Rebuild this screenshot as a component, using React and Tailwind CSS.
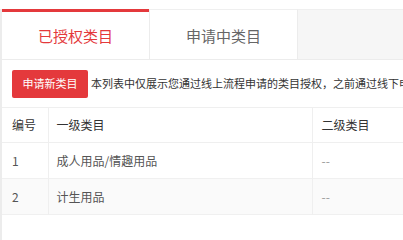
export default function App() {
  const rows = [
    { id: 1, first: "成人用品/情趣用品", second: "--" },
    { id: 2, first: "计生用品", second: "--" },
  ];

  return (
    <div
      className="w-[403px] h-[240px] overflow-hidden bg-white pt-[9px]"
      style={{ fontFamily: '"Noto Sans CJK SC", "Liberation Sans", sans-serif' }}
    >
      <div className="border-l-2 border-[#ececec] h-full">
        {/* Tabs */}
        <div className="flex h-[51px] bg-[#f6f6f6] border-b border-[#ececec]">
          <div className="w-[147px] shrink-0 bg-white border-t-[3px] border-[#e4393c] flex items-center justify-center pt-[2px] text-[15px] text-[#e4393c]">
            已授权类目
          </div>
          <div className="w-[148px] shrink-0 bg-white border-l border-[#ececec] border-t border-t-[#efefef] flex items-center justify-center pt-[3px] text-[15px] text-[#666]">
            申请中类目
          </div>
          <div className="flex-1 border-l border-[#ececec] border-t border-t-[#efefef]" />
        </div>

        {/* Toolbar */}
        <div className="flex items-center h-[47px] pl-[10px] gap-[3px] whitespace-nowrap">
          <button className="shrink-0 w-[76px] h-[28px] rounded-[2px] bg-[#e4393c] text-white text-[11px]">
            申请新类目
          </button>
          <span className="text-[11px] text-[#333]">
            本列表中仅展示您通过线上流程申请的类目授权，之前通过线下申请的类目授权请联系运营人员
          </span>
        </div>

        {/* Table */}
        <table className="w-[420px] border-collapse text-[12px] table-fixed">
          <colgroup>
            <col className="w-[46px]" />
            <col className="w-[264px]" />
            <col />
          </colgroup>
          <thead>
            <tr className="h-[35px] border-t border-b border-[#efefef]">
              <th className="font-normal text-left pl-[10px] text-[#333]">编号</th>
              <th className="font-normal text-left pl-[8px] text-[#333] border-l border-[#efefef]">一级类目</th>
              <th className="font-normal text-left pl-[9px] text-[#333] border-l border-[#efefef]">二级类目</th>
            </tr>
          </thead>
          <tbody>
            {rows.map((r, i) => (
              <tr
                key={r.id}
                className={`h-[36px] border-b border-[#f0f0f0] ${i % 2 === 1 ? "bg-[#fafafa]" : "bg-white"}`}
              >
                <td className="pl-[10px] text-[#555]">{r.id}</td>
                <td className="pl-[8px] text-[#555] border-l border-[#efefef]">{r.first}</td>
                <td className="pl-[9px] text-[#999] border-l border-[#efefef]">{r.second}</td>
              </tr>
            ))}
          </tbody>
        </table>
      </div>
    </div>
  );
}
